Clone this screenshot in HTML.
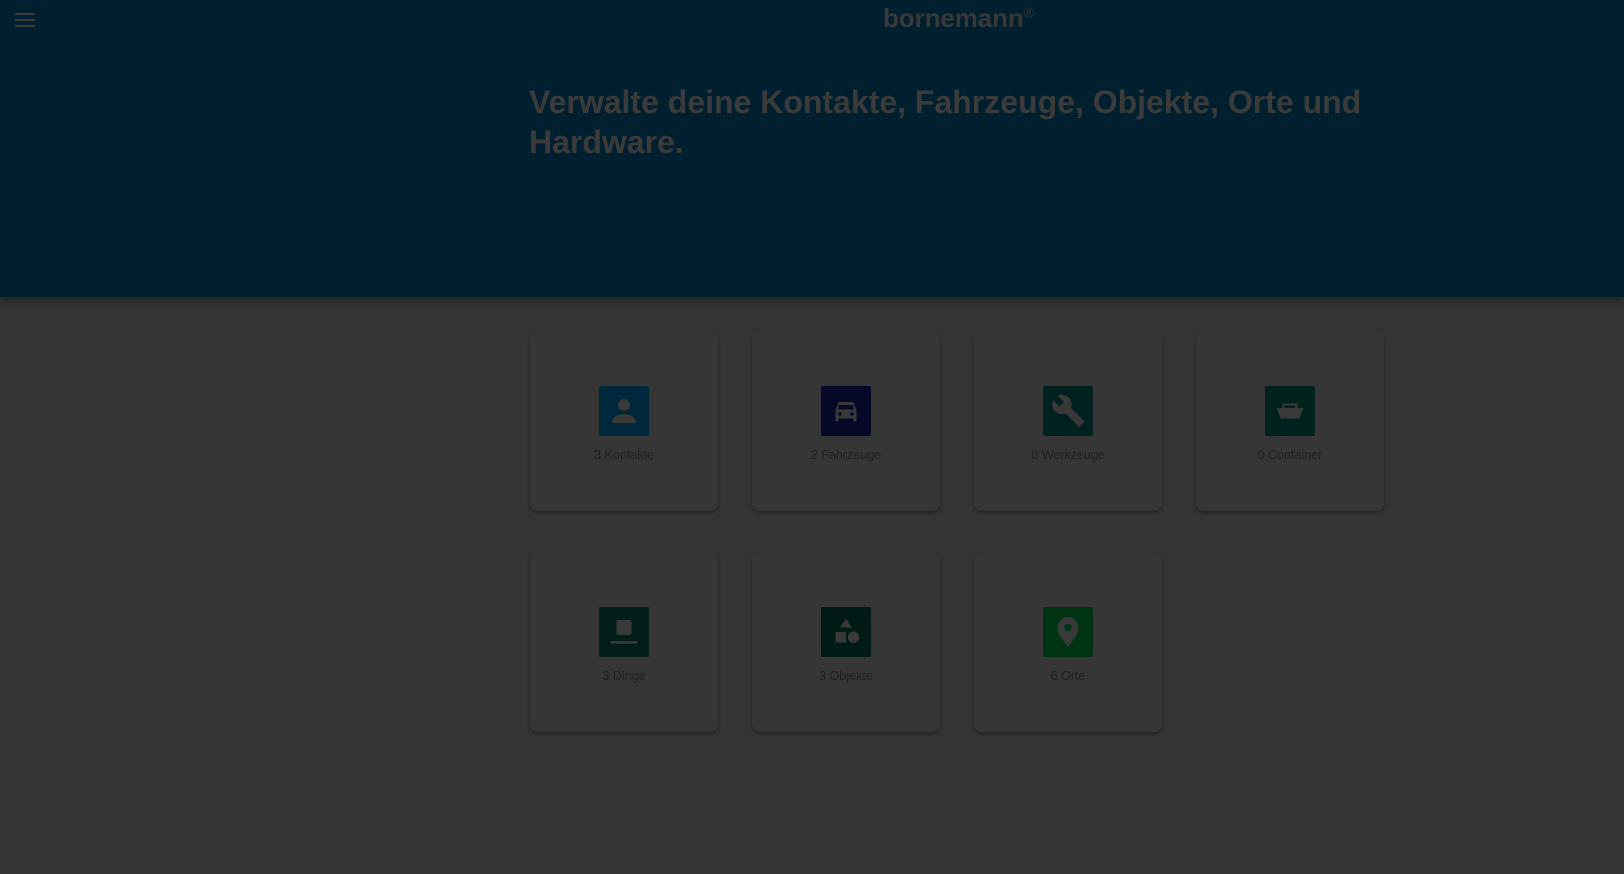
<!DOCTYPE html>
<html><head><meta charset="utf-8"><style>
*{margin:0;padding:0;box-sizing:border-box}
body{width:1624px;height:874px;background:#343434;font-family:"Liberation Sans",sans-serif;overflow:hidden;position:relative}
.hdr{position:absolute;left:0;top:0;width:1624px;height:297px;background:#01202f;box-shadow:0 3px 8px rgba(0,0,0,.4)}
.ham{position:absolute;left:15px;top:13px;width:20px}
.ham i{display:block;height:2px;background:#3c3c3c;margin-bottom:4px}
.logo{position:absolute;left:883px;top:3px;font-size:26px;font-weight:bold;color:#383838;letter-spacing:-0.1px}
.logo sup{font-size:14px;font-weight:normal}
h1{position:absolute;left:529px;top:82px;width:880px;font-size:32px;line-height:40px;color:#3b3b3b;font-weight:bold;letter-spacing:0}
.card{position:absolute;width:188px;height:180px;background:#363636;border-radius:8px;box-shadow:0 2px 3px rgba(0,0,0,.35)}
.ic{position:absolute;left:69px;top:55px;width:50px;height:50px;border-radius:2px;display:flex;align-items:center;justify-content:center}
.lb{position:absolute;left:0;width:100%;top:117px;text-align:center;font-size:12.5px;color:#1f1f1f}
svg{width:36px;height:36px;fill:#393939}
</style></head><body>
<div class="hdr">
<div class="ham"><i></i><i></i><i></i></div>
<div class="logo">bornemann<sup>®</sup></div>
<h1>Verwalte deine Kontakte, Fahrzeuge, Objekte, Orte und Hardware.</h1>
</div>

<div class="card" style="left:530px;top:331px"><div class="ic" style="background:#00283c"><svg viewBox="0 0 24 24"><circle cx="12" cy="8" r="4"/><path d="M4 20c0-4 4-6 8-6s8 2 8 6z"/></svg></div><div class="lb">3 Kontakte</div></div>
<div class="card" style="left:752px;top:331px"><div class="ic" style="background:#050826"><svg viewBox="0 0 24 24"><path d="M5 11l2-5h10l2 5v8h-2v-2H7v2H5z"/><circle cx="8" cy="14" r="1.2" fill="#050826"/><circle cx="16" cy="14" r="1.2" fill="#050826"/><rect x="7" y="8" width="10" height="3" fill="#050826"/></svg></div><div class="lb">2 Fahrzeuge</div></div>
<div class="card" style="left:974px;top:331px"><div class="ic" style="background:#00221e"><svg viewBox="0 0 24 24"><path d="M21 19l-9-9c.9-2.3.4-5-1.5-6.9C8.5 1.1 5.5.7 3.1 1.8L7.4 6 4.4 9 .1 4.8C-1 7.2-.5 10.2 1.5 12.2c1.9 1.9 4.6 2.4 6.9 1.5l9 9z" transform="translate(2 0)"/></svg></div><div class="lb">0 Werkzeuge</div></div>
<div class="card" style="left:1196px;top:331px"><div class="ic" style="background:#00221d"><svg viewBox="0 0 24 24"><path d="M3 10h18l-3 7H6z"/><rect x="7" y="7" width="1.5" height="3"/><rect x="15.5" y="7" width="1.5" height="3"/><rect x="7" y="7" width="10" height="1.2"/></svg></div><div class="lb">0 Container</div></div>

<div class="card" style="left:530px;top:552px"><div class="ic" style="background:#001d18"><svg viewBox="0 0 24 24"><rect x="7" y="4" width="10" height="10" rx="1.5"/><rect x="3" y="18" width="18" height="1.8"/></svg></div><div class="lb">3 Dinge</div></div>
<div class="card" style="left:752px;top:552px"><div class="ic" style="background:#001a15"><svg viewBox="0 0 24 24"><path d="M12 3l4 6H8z"/><rect x="5" y="12" width="7" height="7"/><circle cx="17" cy="15.5" r="3.8"/></svg></div><div class="lb">3 Objekte</div></div>
<div class="card" style="left:974px;top:552px"><div class="ic" style="background:#003415"><svg viewBox="0 0 24 24"><path d="M12 2a7 7 0 0 0-7 7c0 5 7 13 7 13s7-8 7-13a7 7 0 0 0-7-7z"/><circle cx="12" cy="9" r="2.5" fill="#003415"/></svg></div><div class="lb">6 Orte</div></div>
</body></html>
